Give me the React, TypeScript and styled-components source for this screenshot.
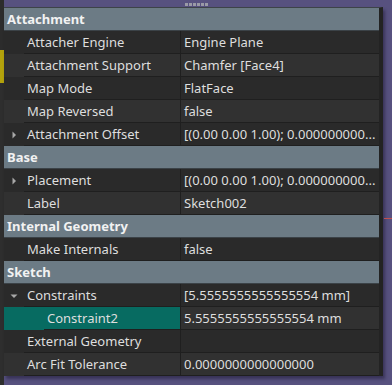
import styled, { createGlobalStyle } from 'styled-components';

const GlobalStyle = createGlobalStyle`
	html, body {
		margin: 0;
		padding: 0;
		background: #57517f;
	}
	body {
		font-family: 'Noto Sans', 'Open Sans', sans-serif;
		font-size: 13px;
	}
`;

const Page = styled.div`
	position: relative;
	display: flex;
	width: 392px;
	height: 385px;
	overflow: hidden;
	background: #57517f;
`;

const LeftStrip = styled.div`
	width: 4px;
	height: 100%;
	display: flex;
	flex-direction: column;
	background: #2c2c2c;
`;

const StripBlock = styled.div<{ $h: number; $c: string }>`
	height: ${(p) => p.$h}px;
	background: ${(p) => p.$c};
`;

const Panel = styled.div`
	margin-top: 7px;
	align-self: flex-start;
	width: 375px;
	border-top: 1px solid #3d4348;
	border-right: 4px solid #232323;
	background: #2b2b2b;
	box-shadow: 2px 3px 3px rgba(20, 16, 40, 0.45);
`;

const Header = styled.div`
	height: 22px;
	line-height: 22px;
	padding-left: 3px;
	background: #6c7b85;
	border-bottom: 1px solid #3b4247;
	color: #f2f2f2;
	font-weight: 700;
`;

const Row = styled.div<{ $alt: boolean }>`
	display: grid;
	grid-template-columns: 176px 1fr;
	height: 23px;
	background: ${(p) => (p.$alt ? '#313131' : '#2a2a2a')};
	color: #dedede;
`;

const NameCell = styled.div<{ $selected?: boolean; $indent: number }>`
	position: relative;
	display: flex;
	align-items: center;
	height: 23px;
	box-sizing: border-box;
	padding-left: ${(p) => p.$indent}px;
	background: ${(p) => (p.$selected ? '#076b61' : 'transparent')};
	white-space: nowrap;
`;

const NameText = styled.div<{ $lineFrom: number }>`
	flex: 1;
	height: 23px;
	line-height: 22px;
	box-sizing: border-box;
	border-bottom: 1px solid #1f1f1f;
	margin-left: ${(p) => p.$lineFrom}px;
	padding-left: 3px;
`;

const Branch = styled.div`
	width: 20px;
	height: 23px;
	display: flex;
	align-items: center;
	justify-content: center;
`;

const ValueCell = styled.div`
	height: 23px;
	line-height: 22px;
	box-sizing: border-box;
	border-left: 1px solid #1f1f1f;
	border-bottom: 1px solid #1f1f1f;
	padding-left: 3px;
	white-space: nowrap;
	overflow: hidden;
`;

const Grip = styled.div`
	position: absolute;
	top: 3px;
	left: 185px;
	display: flex;
	gap: 1px;
`;

const GripDot = styled.div`
	width: 3px;
	height: 3px;
	background: #9a9aa6;
`;

const RedTick = styled.div`
	position: absolute;
	top: 218px;
	left: 384px;
	width: 8px;
	height: 1px;
	background: #c0504f;
`;

type Prop = {
	name: string;
	value: string;
	branch?: 'closed' | 'open';
	child?: boolean;
	selected?: boolean;
};

const sections: { title: string; rows: Prop[] }[] = [
	{
		title: 'Attachment',
		rows: [
			{ name: 'Attacher Engine', value: 'Engine Plane' },
			{ name: 'Attachment Support', value: 'Chamfer [Face4]' },
			{ name: 'Map Mode', value: 'FlatFace' },
			{ name: 'Map Reversed', value: 'false' },
			{
				name: 'Attachment Offset',
				value: '[(0.00 0.00 1.00); 0.000000000...',
				branch: 'closed',
			},
		],
	},
	{
		title: 'Base',
		rows: [
			{
				name: 'Placement',
				value: '[(0.00 0.00 1.00); 0.000000000...',
				branch: 'closed',
			},
			{ name: 'Label', value: 'Sketch002' },
		],
	},
	{
		title: 'Internal Geometry',
		rows: [{ name: 'Make Internals', value: 'false' }],
	},
	{
		title: 'Sketch',
		rows: [
			{ name: 'Constraints', value: '[5.5555555555555554 mm]', branch: 'open' },
			{
				name: 'Constraint2',
				value: '5.5555555555555554 mm',
				child: true,
				selected: true,
			},
			{ name: 'External Geometry', value: '' },
			{ name: 'Arc Fit Tolerance', value: '0.0000000000000000' },
		],
	},
];

function Arrow({ open }: { open: boolean }) {
	return (
		<svg width="8" height="8" viewBox="0 0 8 8">
			{open ? (
				<polygon points="0.5,2.5 7.5,2.5 4,6" fill="#a8a8a8" />
			) : (
				<polygon points="2.5,0.5 6,4 2.5,7.5" fill="#a8a8a8" />
			)}
		</svg>
	);
}

export default function App() {
	return (
		<>
			<GlobalStyle />
			<Page>
				<LeftStrip>
					<StripBlock $h={50} $c="#2c2c2c" />
					<StripBlock $h={33} $c="#b3a20c" />
					<StripBlock $h={302} $c="#2e2e2e" />
				</LeftStrip>
				<Panel>
					{sections.map((s) => (
						<div key={s.title}>
							<Header>{s.title}</Header>
							{s.rows.map((r, i) => (
								<Row key={r.name} $alt={i % 2 === 1}>
									<NameCell $selected={r.selected} $indent={0}>
										<Branch>
											{r.branch && <Arrow open={r.branch === 'open'} />}
										</Branch>
										<NameText $lineFrom={r.child ? 20 : 0}>
											{r.name}
										</NameText>
									</NameCell>
									<ValueCell>{r.value}</ValueCell>
								</Row>
							))}
						</div>
					))}
				</Panel>
				<Grip>
					{[0, 1, 2, 3, 4, 5].map((i) => (
						<GripDot key={i} />
					))}
				</Grip>
				<RedTick />
			</Page>
		</>
	);
}
